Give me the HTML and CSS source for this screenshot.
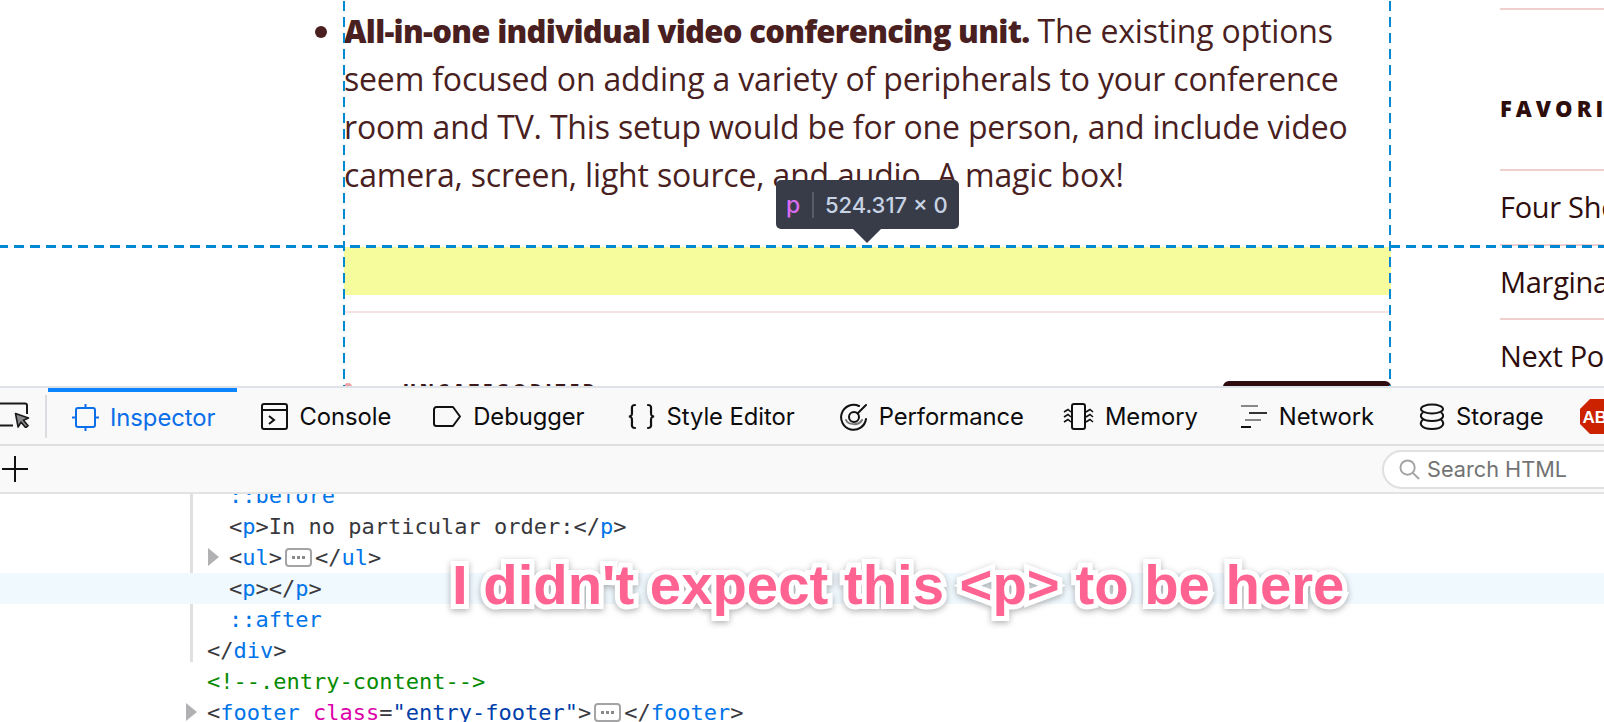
FILE: index.html
```html
<!DOCTYPE html>
<html lang="en">
<head>
<meta charset="utf-8">
<title>Inspector</title>
<link rel="stylesheet" href="styles.css">
</head>
<body>
<div class="page">
  <main class="article">
    <ul class="items">
      <li class="item"><p class="item-text"><strong class="lead">All-in-one individual video conferencing unit.</strong> The existing options<br>seem focused on adding a variety of peripherals to your conference<br>room and TV. This setup would be for one person, and include video<br>camera, screen, light source, and audio. A magic box!</p></li>
    </ul>
    <div class="empty-p"></div>
    <footer class="entry-footer">
      <span class="cat-dot"></span>
      <span class="cat">UNCATEGORIZED</span>
      <span class="edit"></span>
    </footer>
  </main>
  <aside class="sidebar">
    <h2 class="side-title">FAVORITES</h2>
    <ul class="side-list">
      <li class="side-item">Four Short Links</li>
      <li class="side-item">Marginal Notes</li>
      <li class="side-item">Next Post</li>
    </ul>
  </aside>
  <div class="guide-h"></div>
  <div class="guide-v guide-left"></div>
  <div class="guide-v guide-right"></div>
  <div class="tip">
    <span class="tip-tag">p</span><span class="tip-sep"></span><span class="tip-size">524.317 × 0</span>
  </div>
</div>
<section class="devtools">
  <nav class="tabbar">
    <div class="picker">
      <svg class="icon-picker" width="32" height="26" viewBox="0 0 32 26" fill="none"><path d="M0 1.500H25a2 2 0 0 1 2 2V12M13 23.500H0" stroke="#1a1a1b" stroke-width="2"/><path d="M15.500 11.500l13 4.500-5 2.300 4.600 5.400-2.400 2-4.600-5.500-3 4.800z" fill="#8a8a8c" stroke="#1a1a1b" stroke-width="1.600" stroke-linejoin="round"/></svg>
    </div>
    <a class="tab tab-active">
      <svg width="27" height="27" viewBox="0 0 27 27" fill="none" stroke="#0a6fe8" stroke-width="2"><rect x="4" y="4" width="19" height="19" rx="2"/><path d="M13.500 0v4M13.500 23v4M0 13.500h4M23 13.500h4"/></svg>
      <span>Inspector</span>
    </a>
    <a class="tab">
      <svg width="27" height="27" viewBox="0 0 27 27" fill="none" stroke="#111" stroke-width="2"><rect x="1" y="1" width="25" height="25" rx="2"/><path d="M1 7h25"/><path d="M8 13l5 4-5 4"/></svg>
      <span>Console</span>
    </a>
    <a class="tab">
      <svg width="29" height="27" viewBox="0 0 29 27" fill="none" stroke="#111" stroke-width="2"><path d="M3.500 4H20l7 9.500-7 9.500H3.500A2.500 2.500 0 0 1 1 20.500V6.500A2.500 2.500 0 0 1 3.500 4z" stroke-linejoin="round"/></svg>
      <span>Debugger</span>
    </a>
    <a class="tab">
      <svg width="29" height="27" viewBox="0 0 29 27" fill="none" stroke="#111" stroke-width="2.200" stroke-linecap="round"><path d="M8 2C4 2 5 5 5 8.500S5 13 2 13.500C5 14 5 15 5 18.500S4 25 8 25"/><path d="M21 2c4 0 3 3 3 6.500s0 4.500 3 5c-3 .5-3 1.500-3 5S25 25 21 25"/></svg>
      <span>Style Editor</span>
    </a>
    <a class="tab tab-perf">
      <svg width="28" height="28" viewBox="0 0 28 28" fill="none" stroke-linecap="round"><path d="M19 3A12.500 12.500 0 1 0 26 16" stroke="#111" stroke-width="2"/><circle cx="14" cy="14" r="5" stroke="#111" stroke-width="2"/><path d="M17.500 10.500L26 2" stroke="#111" stroke-width="2"/><path d="M6 17c2 5 13 6 16 0" stroke="#777" stroke-width="2"/></svg>
      <span>Performance</span>
    </a>
    <a class="tab tab-memory">
      <svg width="31" height="27" viewBox="0 0 31 27" fill="none" stroke="#111" stroke-width="2"><rect x="9" y="1" width="13" height="25" rx="2"/><path d="M1 9l4-2.500L8 9M1 14l4-2.500L8 14M1 19l4-2.500L8 19M23 9l4-2.500L30 9M23 14l4-2.500L30 14M23 19l4-2.500L30 19" stroke-width="1.600"/></svg>
      <span>Memory</span>
    </a>
    <a class="tab">
      <svg width="28" height="24" viewBox="0 0 28 24" fill="none" stroke-width="2"><path d="M1 1h17" stroke="#888"/><path d="M9 8h18" stroke="#333"/><path d="M5 15h16" stroke="#888"/><path d="M1 22h10" stroke="#111"/></svg>
      <span>Network</span>
    </a>
    <a class="tab tab-storage">
      <svg width="26" height="27" viewBox="0 0 26 27" fill="none" stroke="#111" stroke-width="2"><ellipse cx="13" cy="6" rx="11" ry="4.500"/><path d="M4 9.500C0 12 1 18 13 18s13-6 9-8.500"/><path d="M4 16.500C0 20 1 26 13 26s13-6 9-9.500"/></svg>
      <span>Storage</span>
    </a>
    <svg class="abp" width="35" height="35" viewBox="0 0 35 35"><path d="M10 0h15l10 10v15l-10 10H10L0 25V10z" fill="#cc2200"/><text x="2.500" y="23.500" class="abp-text">ABP</text></svg>
  </nav>
  <div class="searchbar">
    <svg class="add" width="26" height="26" viewBox="0 0 26 26" stroke="#111" stroke-width="2"><path d="M13 0v26M0 13h26"/></svg>
    <div class="search">
      <svg width="21" height="21" viewBox="0 0 22 22" fill="none" stroke="#a4a4a6" stroke-width="2"><circle cx="9" cy="9" r="7.500"/><path d="M14.500 14.500L21 21"/></svg>
      <span>Search HTML</span>
    </div>
  </div>
  <div class="markup">
    <div class="rows">
      <div class="tree">
        <span class="tree-guide"></span>
        <div class="row d1"><span class="tn">::before</span></div>
        <div class="row d1"><span class="pn">&lt;</span><span class="tn">p</span><span class="pn">&gt;In no particular order:&lt;/</span><span class="tn">p</span><span class="pn">&gt;</span></div>
        <div class="row d1 closed"><span class="pn">&lt;</span><span class="tn">ul</span><span class="pn">&gt;</span><span class="more"><i></i><i></i><i></i></span><span class="pn">&lt;/</span><span class="tn">ul</span><span class="pn">&gt;</span></div>
        <div class="row d1 hl"><span class="pn">&lt;</span><span class="tn">p</span><span class="pn">&gt;&lt;/</span><span class="tn">p</span><span class="pn">&gt;</span></div>
        <div class="row d1"><span class="tn">::after</span></div>
        <div class="row d0"><span class="pn">&lt;/</span><span class="tn">div</span><span class="pn">&gt;</span></div>
      </div>
      <div class="row d0"><span class="cm">&lt;!--.entry-content--&gt;</span></div>
      <div class="row d0 closed top"><span class="pn">&lt;</span><span class="tn">footer</span> <span class="an">class</span><span class="pn">=</span><span class="av">"entry-footer"</span><span class="pn">&gt;</span><span class="more"><i></i><i></i><i></i></span><span class="pn">&lt;/</span><span class="tn">footer</span><span class="pn">&gt;</span></div>
    </div>
  </div>
  <div class="note">I didn't expect this &lt;p&gt; to be here</div>
</section>
</body>
</html>
```
FILE: styles.css
```css
* { box-sizing: border-box; }
html, body { margin: 0; padding: 0; }
body {
  width: 1604px;
  height: 722px;
  overflow: hidden;
  background: #fff;
  position: relative;
}

/* page under inspection */
.page {
  height: 386px;
  position: relative;
  overflow: hidden;
  display: flex;
  font-family: "Open Sans", "Liberation Sans", sans-serif;
}
.article {
  margin-left: 344px;
  width: 1047px;
  flex: none;
  color: #4a1f1f;
}
.items {
  list-style: none;
  margin: 7px 0 0;
  padding: 0;
}
.item { position: relative; }
.item::before {
  content: "";
  position: absolute;
  left: -29px;
  top: 19px;
  width: 12px;
  height: 12px;
  border-radius: 50%;
  background: #4a1f1f;
}
.item-text {
  margin: 0;
  font-size: 32px;
  line-height: 48px;
  white-space: nowrap;
  letter-spacing: -0.18px;
}
.lead { font-size: 31px; font-weight: 800; letter-spacing: -0.7px; }
.empty-p {
  height: 48px;
  margin-top: 48px;
  background: #f6fb9c;
}
.entry-footer {
  margin-top: 16px;
  border-top: 2px solid #f6e2e2;
  height: 75px;
  display: flex;
  align-items: flex-start;
  padding-top: 69px;
  position: relative;
}
.cat-dot {
  width: 8px;
  height: 8px;
  margin-top: 1px;
  border-radius: 50%;
  background: #eba3a6;
  flex: none;
}
.cat {
  margin-left: 51px;
  margin-top: -1px;
  font-size: 17px;
  line-height: 20px;
  font-weight: 800;
  letter-spacing: 3.900px;
  color: #3a1a1a;
}
.edit {
  margin-left: auto;
  width: 168px;
  height: 20px;
  margin-top: -1px;
  background: #2e0c0f;
  border-radius: 6px 6px 0 0;
}
.sidebar {
  margin-left: 109px;
  width: 300px;
  flex: none;
  padding-top: 8px;
  color: #2e0d0d;
  white-space: nowrap;
}
.side-title {
  margin: 0;
  height: 161px;
  border-top: 2px solid #f0cfcf;
  padding-top: 84px;
  font-size: 22px;
  line-height: 28px;
  font-weight: 800;
  letter-spacing: 4px;
}
.side-list { list-style: none; margin: 0; padding: 0; }
.side-item {
  border-top: 2px solid #f0cfcf;
  height: 74.500px;
  font-size: 29px;
  line-height: 71px;
  letter-spacing: -0.3px;
}

/* highlighter guides */
.guide-h {
  position: absolute;
  left: 0;
  top: 244.500px;
  width: 100%;
  height: 3px;
  background: linear-gradient(90deg, #0088d4 0 10px, transparent 10px 16px) 14px 0 / 16px 100%;
}
.guide-v {
  position: absolute;
  top: 0;
  width: 2px;
  height: 386px;
  background: linear-gradient(180deg, #0088d4 0 10px, transparent 10px 16px) 0 1px / 100% 16px;
}
.guide-left { left: 343px; }
.guide-right { left: 1389px; }

.tip {
  position: absolute;
  left: 776px;
  top: 180px;
  width: 183px;
  height: 49px;
  background: #383c48;
  border-radius: 5px;
  display: flex;
  align-items: center;
  padding-left: 10px;
  font-family: "Inter", "Liberation Sans", sans-serif;
  font-size: 22px;
  font-weight: 500;
  white-space: nowrap;
}
.tip::after {
  content: "";
  position: absolute;
  left: 77px;
  top: 49px;
  border-left: 14px solid transparent;
  border-right: 14px solid transparent;
  border-top: 14px solid #383c48;
}
.tip-tag { color: #d86cf0; font-size: 23px; width: 16px; }
.tip-sep { width: 2px; height: 26px; background: #585c66; margin: 0 11px 0 10px; }
.tip-size { color: #c7d3e4; }

/* devtools */
.devtools {
  height: 336px;
  border-top: 2px solid #dfe2e6;
  position: relative;
  font-family: "Inter", "Liberation Sans", sans-serif;
  overflow: hidden;
  background: #fff;
}
.tabbar {
  height: 56px;
  background: #f9f9fa;
  display: flex;
  align-items: stretch;
  color: #0c0c0d;
  position: relative;
  white-space: nowrap;
}
.picker {
  width: 48px;
  flex: none;
  padding-top: 14px;
  position: relative;
}
.picker::after {
  content: "";
  position: absolute;
  right: 1px;
  top: 7px;
  height: 43px;
  width: 2px;
  background: #dcdde0;
}
.icon-picker { display: block; }
.tab {
  display: flex;
  align-items: center;
  gap: 11px;
  padding: 0 18px 2px 24px;
  font-size: 23.800px;
  letter-spacing: -0.05px;
  flex: none;
  border-top: 3px solid transparent;
}
.tab-active {
  color: #0a6fe8;
  border-top: 4px solid #0a84ff;
  padding-right: 22px;
}
.tab-perf { padding-left: 27px; padding-right: 15px; }
.tab-storage { padding-left: 27px; }
.abp { margin: 11px 0 0 18px; flex: none; }
.abp-text {
  font-family: "Liberation Sans", sans-serif;
  font-weight: 700;
  font-size: 17px;
  fill: #fff;
}
.searchbar {
  height: 50px;
  background: #f9f9fa;
  border-top: 2px solid #dfdfe0;
  border-bottom: 2px solid #e3e3e4;
  display: flex;
  align-items: center;
  justify-content: space-between;
  padding-left: 2px;
}
.add { flex: none; }
.search {
  width: 240px;
  height: 39px;
  margin-right: -18px;
  background: #fff;
  border: 2px solid #e0e0e2;
  border-radius: 20px;
  display: flex;
  align-items: center;
  gap: 7px;
  padding-left: 15px;
  font-size: 21.700px;
  color: #737373;
  white-space: nowrap;
}

.markup {
  font-family: "DejaVu Sans Mono", "Liberation Mono", monospace;
  font-size: 22px;
  line-height: 31px;
  height: 228px;
  overflow: hidden;
  color: #38383d;
}
.rows { margin-top: -14px; }
.tree { position: relative; }
.tree-guide {
  position: absolute;
  left: 190px;
  top: 14px;
  bottom: 4px;
  width: 3px;
  background: #e0e0e2;
}
.row {
  height: 31px;
  white-space: pre;
  position: relative;
}
.d1 { padding-left: 229px; }
.d0 { padding-left: 207px; }
.hl { background: #f0f9fe; }
.closed::before {
  content: "";
  position: absolute;
  left: 208px;
  top: 6px;
  border-left: 11px solid #b1b1b3;
  border-top: 9px solid transparent;
  border-bottom: 9px solid transparent;
}
.closed.top::before { left: 186px; }
.tn { color: #0074e8; }
.pn { color: #38383d; }
.an { color: #dd00a9; }
.av { color: #003eaa; }
.cm { color: #058b00; }
.more {
  display: inline-flex;
  align-items: center;
  justify-content: center;
  gap: 2px;
  width: 27px;
  height: 19px;
  margin: 6px 3px 0 3px;
  border: 2px solid #a4a4a6;
  border-radius: 4px;
  vertical-align: top;
  background: #fff;
}
.more i {
  width: 3px;
  height: 3px;
  background: #8a8a8c;
}

.note {
  position: absolute;
  left: 452px;
  top: 167px;
  font-family: "Liberation Sans", sans-serif;
  font-weight: 700;
  font-size: 56.300px;
  line-height: 60px;
  color: #ff6392;
  white-space: nowrap;
  -webkit-text-stroke: 10px #fff;
  paint-order: stroke fill;
  filter: drop-shadow(0 2px 3px rgba(0,0,0,.3));
}
```
